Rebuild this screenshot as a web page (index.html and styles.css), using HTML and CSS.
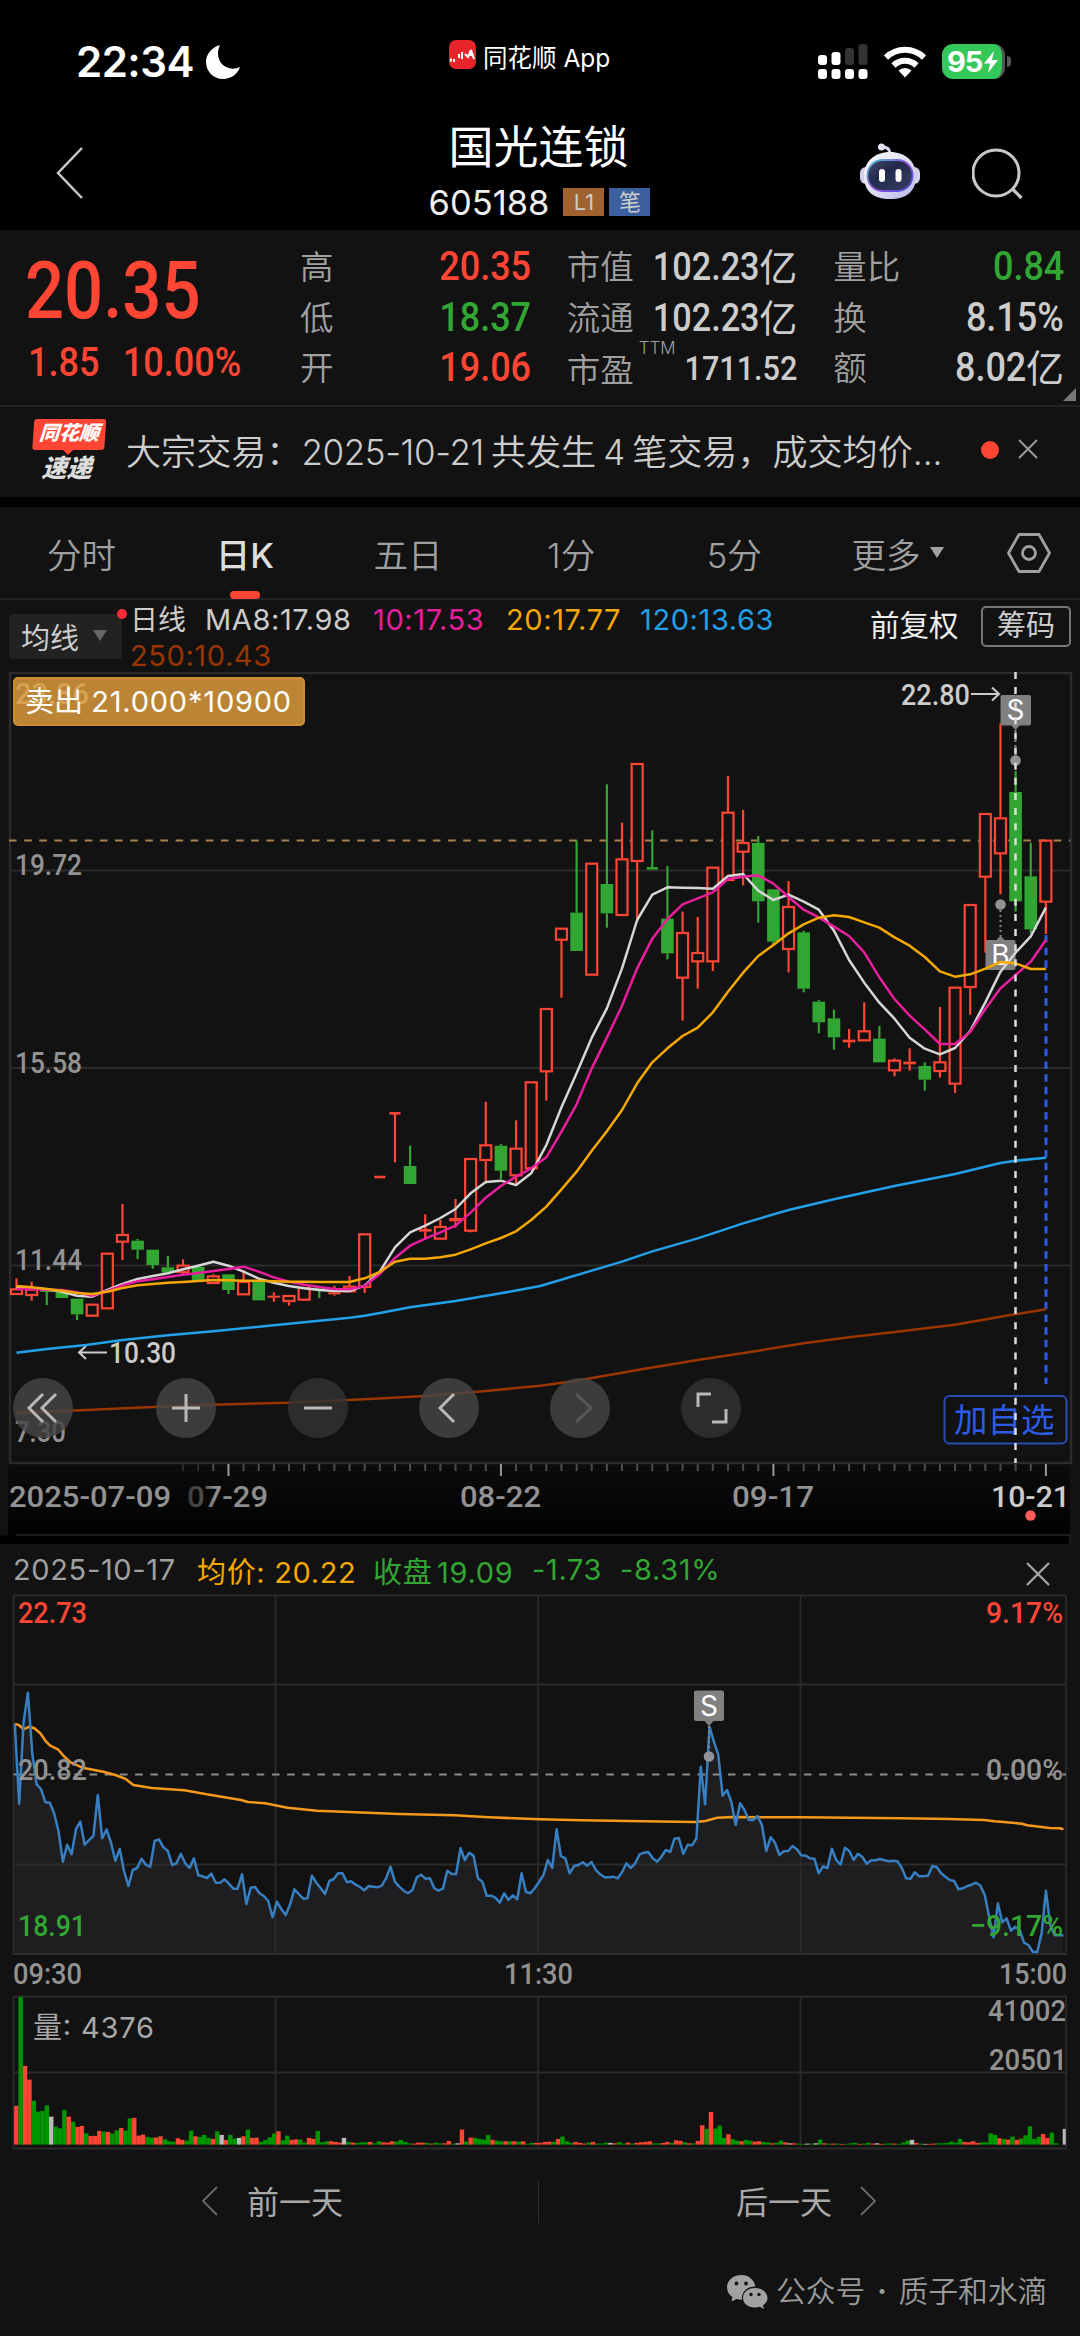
FILE: index.html
```html
<!DOCTYPE html>
<html lang="zh-CN">
<head>
  <meta charset="UTF-8">
  <title>国光连锁 605188</title>
  <link rel="stylesheet" href="styles.css">
</head>
<body>

<div class="status-bar">
  <div class="status-time">22:34
    <svg width="36" height="36" viewBox="0 0 36 36"><path d="M15 1 C7 3 1 10 1 18 C1 27 8 35 18 35 C26 35 33 30 35 23 C31 25 27 25 24 24 C15 22 10 11 15 1 Z" fill="#fff"/></svg>
  </div>
  <div class="status-app">
    <svg width="27" height="29" viewBox="0 0 27 29"><rect width="27" height="29" rx="7" fill="#e8252b"/><path d="M2 18.500 v3 M5 19 v3 M10 14 v4 M13 12 v7 M16 14 l3 3 l3 -7 v6 M22 10 l3 9" fill="none" stroke="#fff" stroke-width="2"/></svg>
    <span>同花顺 App</span>
  </div>
  <div class="status-icons">
    <svg width="50" height="36" viewBox="0 0 50 36">
      <g fill="#fff"><rect x="0" y="11" width="9" height="10" rx="3"/><rect x="13.5" y="8" width="9" height="13" rx="3"/></g>
      <g fill="#333"><rect x="27" y="4" width="9" height="17" rx="3"/><rect x="40.5" y="0" width="9" height="21" rx="3"/></g>
      <g fill="#fff"><rect x="0" y="25" width="9" height="10" rx="3"/><rect x="13.5" y="25" width="9" height="10" rx="3"/><rect x="27" y="25" width="9" height="10" rx="3"/><rect x="40.5" y="25" width="9" height="10" rx="3"/></g>
    </svg>
    <svg class="wifi" width="42" height="32" viewBox="0 0 42 32">
      <g fill="none" stroke="#fff" stroke-width="6"><path d="M2 11.5 A27 27 0 0 1 40 11.5"/><path d="M9.5 19.5 A16.5 16.5 0 0 1 32.5 19.5"/></g>
      <path d="M21 31.500 L14.500 24.500 A9.500 9.500 0 0 1 27.500 24.500 Z" fill="#fff"/>
    </svg>
    <div class="battery">95<svg width="14" height="22" viewBox="0 0 14 22"><path d="M10 0 L0 12.500 h6 L4 22 L14 9 H8 Z" fill="#fff"/></svg></div>
    <div class="battery-cap"></div>
  </div>
</div>

<div class="nav">
  <svg class="back" width="28" height="52" viewBox="0 0 28 52"><path d="M26 1 L2 26 L26 51" fill="none" stroke="#c8c8c8" stroke-width="2.500"/></svg>
  <div class="nav-title">
    <h1>国光连锁</h1>
    <div class="code">605188 <span class="tag tag-l1">L1</span><span class="tag tag-note">笔</span></div>
  </div>
  <svg class="robot" width="62" height="58" viewBox="0 0 62 58">
    <defs>
      <linearGradient id="head" x1="0" y1="0" x2="1" y2="1"><stop offset="0" stop-color="#fff"/><stop offset="0.5" stop-color="#dedef4"/><stop offset="1" stop-color="#b8b8ea"/></linearGradient>
      <linearGradient id="rim" x1="0" y1="0" x2="1" y2="1"><stop offset="0" stop-color="#45c8d8"/><stop offset="0.5" stop-color="#9450d8"/><stop offset="1" stop-color="#4a50e0"/></linearGradient>
      <linearGradient id="face" x1="0" y1="0" x2="1" y2="1"><stop offset="0" stop-color="#464d70"/><stop offset="0.400" stop-color="#222a4c"/><stop offset="1" stop-color="#383f66"/></linearGradient>
    </defs>
    <path d="M31 11 Q31 4 23 4" fill="none" stroke="#dcdcf0" stroke-width="2.800"/>
    <circle cx="22.500" cy="4" r="3.500" fill="#e4e4f6"/>
    <rect x="1" y="24" width="60" height="17" rx="6" fill="#d2d2ea"/>
    <path d="M31 9 C46 9 57 18 57 33 C57 48 48 56 31 56 C14 56 5 48 5 33 C5 18 16 9 31 9 Z" fill="url(#head)"/>
    <rect x="8.500" y="17" width="45" height="31" rx="15" fill="url(#face)" stroke="url(#rim)" stroke-width="1.800"/>
    <rect x="20" y="26" width="6" height="13" rx="3" fill="#fff"/><rect x="36.500" y="26" width="6" height="13" rx="3" fill="#fff"/>
  </svg>
  <svg class="search" width="52" height="52" viewBox="0 0 52 52"><circle cx="24" cy="25" r="23" fill="none" stroke="#c8c8c8" stroke-width="3"/><path d="M40.500 41 L49.500 50" stroke="#c8c8c8" stroke-width="3.200"/></svg>
</div>

<div class="quote">
  <div class="quote-main red">
    <div class="price num">20.35</div>
    <div class="change num"><span>1.85</span><span>10.00%</span></div>
  </div>
  <dl class="stats stats-a">
    <div><dt>高</dt><dd class="num red">20.35</dd></div>
    <div><dt>低</dt><dd class="num green">18.37</dd></div>
    <div><dt>开</dt><dd class="num red">19.06</dd></div>
  </dl>
  <dl class="stats stats-b">
    <div><dt>市值</dt><dd><span class="num">102.23</span>亿</dd></div>
    <div><dt>流通</dt><dd><span class="num">102.23</span>亿</dd></div>
    <div><dt class="pe">市盈<sup>TTM</sup></dt><dd class="num small">1711.52</dd></div>
  </dl>
  <dl class="stats stats-c">
    <div><dt>量比</dt><dd class="num green">0.84</dd></div>
    <div><dt>换</dt><dd class="num">8.15%</dd></div>
    <div><dt>额</dt><dd><span class="num">8.02</span>亿</dd></div>
  </dl>
  <div class="corner"></div>
</div>

<div class="news">
  <div class="news-logo"><b>同花顺</b><i>速递</i></div>
  <p>大宗交易：<span class="n1">2025-10-21</span>共发生<span class="n2">4</span>笔交易，成交均价...</p>
  <span class="dot"></span>
  <svg width="20" height="20" viewBox="0 0 20 20"><path d="M1 1 L19 19 M19 1 L1 19" stroke="#999" stroke-width="2"/></svg>
</div>

<div class="tabs">
  <div class="tab">分时</div>
  <div class="tab active">日K</div>
  <div class="tab">五日</div>
  <div class="tab">1分</div>
  <div class="tab">5分</div>
  <div class="tab">更多<span class="caret"></span></div>
  <svg class="gear" width="44" height="40" viewBox="0 0 44 40"><path d="M12 1.500 H32 L42.500 20 L32 38.500 H12 L1.500 20 Z" fill="none" stroke="#a0a0a0" stroke-width="2.800" stroke-linejoin="round"/><circle cx="22" cy="20" r="6.500" fill="none" stroke="#a0a0a0" stroke-width="2.800"/></svg>
</div>

<div class="ma-row">
  <div class="ma-select">均线<span class="caret"></span></div>
  <div class="ma-values">
    <span class="period">日线</span><span class="ma8">MA8:17.98</span><span class="ma10">10:17.53</span><span class="ma20">20:17.77</span><span class="ma120">120:13.63</span>
    <div class="ma250">250:10.43</div>
  </div>
  <div class="adjust">前复权</div>
  <div class="chips">筹码</div>
</div>

<div class="k-wrap">
  <svg id="kchart" width="1080" height="872" viewBox="0 672 1080 872">
    <defs>
      <linearGradient id="axisBg" x1="0" y1="0" x2="0" y2="1"><stop offset="0" stop-color="#0c0c0c"/><stop offset="1" stop-color="#000"/></linearGradient>
      <linearGradient id="fadeText" x1="0" y1="0" x2="1" y2="0"><stop offset="0" stop-color="#3c3c3c"/><stop offset="0.200" stop-color="#505050"/><stop offset="0.350" stop-color="#8e8e8e"/></linearGradient>
    </defs>
    <rect x="8" y="1463" width="1062" height="81" fill="url(#axisBg)"/>
    <path d="M0 1540 H1065" stroke="#000" stroke-width="9"/>
    <path d="M16 1535 H1070 V1544" class="axis-end"/>
    <rect x="10" y="673" width="1061" height="790" class="grid frame"/>
    <path d="M10 870.500 H1070 M10 1068 H1070 M10 1265.500 H1070" class="grid"/>
    <path d="M9 840.500 H1070" class="last-price"/>
    <g id="candles"></g>
    <g class="axis">
      <text x="15" y="875" textLength="67" lengthAdjust="spacingAndGlyphs">19.72</text>
      <text x="15" y="1073" textLength="67" lengthAdjust="spacingAndGlyphs">15.58</text>
      <text x="15" y="1270" textLength="67" lengthAdjust="spacingAndGlyphs">11.44</text>
      <text x="15" y="1442" textLength="51" lengthAdjust="spacingAndGlyphs">7.30</text>
      <text x="9" y="1507" textLength="162" lengthAdjust="spacingAndGlyphs">2025-07-09</text>
      <text x="187" y="1507" textLength="81" lengthAdjust="spacingAndGlyphs" class="fade">07-29</text>
      <text x="460" y="1507" textLength="81" lengthAdjust="spacingAndGlyphs">08-22</text>
      <text x="732" y="1507" textLength="82" lengthAdjust="spacingAndGlyphs">09-17</text>
    </g>
    <g class="axis bright">
      <text x="991" y="1507" textLength="79" lengthAdjust="spacingAndGlyphs">10-21</text>
      <text x="901" y="705" textLength="69" lengthAdjust="spacingAndGlyphs">22.80</text>
      <text x="109" y="1363" textLength="67" lengthAdjust="spacingAndGlyphs">10.30</text>
    </g>
    <path d="M971 694 H999 M992 687.500 L999 694 L992 700.500 M107 1352.500 H79 M86 1346 L79 1352.500 L86 1359" class="arrow"/>
    <g id="ticks"></g>
    <circle cx="1030.500" cy="1515.500" r="5.200" fill="#ff5a5a"/>
    <path d="M1046 935 V1384" class="today"/>
    <g class="marker">
      <rect x="985.500" y="940" width="30" height="30" rx="2"/>
      <path d="M996 940.500 l4.500 -5 l4.500 5 Z"/>
      <path d="M1000.500 910 V936" class="dots"/>
      <circle cx="1000.500" cy="904.500" r="5.300"/>
      <text x="1000.500" y="965">B</text>
      <rect x="1000.500" y="695" width="30.500" height="30.500" rx="2"/>
      <path d="M1011 725 l4.500 5 l4.500 -5 Z"/>
      <path d="M1015.500 730 V756" class="dots"/>
      <circle cx="1015.500" cy="760.500" r="5.300"/>
      <text x="1015.500" y="720">S</text>
    </g>
    <g id="averages"></g>
    <rect x="944.500" y="1396" width="122" height="47.500" rx="5" class="add-box"/>
    <text x="954" y="1432" class="add-text">加自选</text>
    <path d="M1015.500 672 V1463" class="cursor"/>
  </svg>
  <div class="trade-tip"><i>23.86</i>卖出 <span>21.000*10900</span></div>
  <div class="chart-tools">
    <button><svg viewBox="0 0 60 60"><path d="M30 16 L16 30 L30 44 M43 16 L29 30 L43 44"/></svg></button>
    <button><svg viewBox="0 0 60 60"><path d="M30 16 V44 M16 30 H44" stroke-width="3.500"/></svg></button>
    <button class="dim"><svg viewBox="0 0 60 60"><path d="M16 30 H44" stroke-width="3.500"/></svg></button>
    <button><svg viewBox="0 0 60 60"><path d="M35 16 L21 30 L35 44"/></svg></button>
    <button class="off"><svg viewBox="0 0 60 60"><path d="M26 16 L41 30 L26 44"/></svg></button>
    <button class="dim"><svg viewBox="0 0 60 60"><path d="M17 29 V16 H30 M45 31 V44 H31" stroke-width="3.500"/></svg></button>
  </div>
</div>

<div class="day-head">
  <span class="d-date">2025-10-17</span>
  <span class="d-avg">均价: <b>20.22</b></span>
  <span class="d-close">收盘 <b>19.09</b></span>
  <span class="d-diff">-1.73</span>
  <span class="d-pct">-8.31%</span>
  <svg width="24" height="24" viewBox="0 0 24 24"><path d="M1 1 L23 23 M23 1 L1 23" stroke="#a8a8a8" stroke-width="2.200"/></svg>
</div>

<svg id="daychart" class="block" width="1080" height="564" viewBox="0 1592 1080 564">
  <path id="dayArea" fill="#1e1e20"/>
  <path d="M13.500 1595.500 H1066 V1954 H13.500 Z M13.500 1684.500 H1066 M13.500 1864.500 H1066 M275.500 1595 V1954 M538 1595 V1954 M800.500 1595 V1954" class="grid"/>
  <path d="M13.500 1996.500 H1066 V2148.500 H13.500 Z M13.500 2072.500 H1066 M275.500 1996 V2148 M538 1996 V2148 M800.500 1996 V2148" class="grid"/>
  <path d="M13.500 1774.500 H1066" class="zero"/>
  <path id="dayAvg" class="line" stroke="#f5981c"/>
  <path id="dayPrice" class="line" stroke="#377fc0"/>
  <g id="volume"></g>
  <g class="axis">
    <text x="18" y="1623" textLength="69" lengthAdjust="spacingAndGlyphs" class="up">22.73</text>
    <text x="986" y="1623" textLength="77" lengthAdjust="spacingAndGlyphs" class="up">9.17%</text>
    <text x="18" y="1779.500" textLength="69" lengthAdjust="spacingAndGlyphs">20.82</text>
    <text x="986" y="1779.500" textLength="77" lengthAdjust="spacingAndGlyphs">0.00%</text>
    <text x="18" y="1936" textLength="68" lengthAdjust="spacingAndGlyphs" class="down">18.91</text>
    <text x="970" y="1936" textLength="93" lengthAdjust="spacingAndGlyphs" class="down">−9.17%</text>
    <text x="13" y="1984" textLength="69" lengthAdjust="spacingAndGlyphs">09:30</text>
    <text x="504" y="1984" textLength="69" lengthAdjust="spacingAndGlyphs">11:30</text>
    <text x="999" y="1984" textLength="68" lengthAdjust="spacingAndGlyphs">15:00</text>
    <text x="988" y="2020.500" textLength="78" lengthAdjust="spacingAndGlyphs">41002</text>
    <text x="989" y="2070" textLength="78" lengthAdjust="spacingAndGlyphs">20501</text>
  </g>
  <text x="33" y="2038" textLength="121" class="vol-text">量: 4376</text>
  <g class="marker">
    <rect x="694" y="1690.500" width="30" height="30.500" rx="2"/>
    <path d="M704.500 1721 l4.500 5 l4.500 -5 Z"/>
    <path d="M709 1726 V1751" class="dots"/>
    <circle cx="709" cy="1756.500" r="5.300"/>
    <text x="709" y="1716">S</text>
  </g>
</svg>

<div class="day-nav">
  <div class="prev"><svg width="16" height="30" viewBox="0 0 16 30"><path d="M15 1 L1 15 L15 29" fill="none" stroke="#6a6a6a" stroke-width="1.800"/></svg><span>前一天</span></div>
  <div class="next"><span>后一天</span><svg width="16" height="30" viewBox="0 0 16 30"><path d="M1 1 L15 15 L1 29" fill="none" stroke="#6a6a6a" stroke-width="1.800"/></svg></div>
</div>

<div class="watermark">
  <svg width="41" height="34" viewBox="0 0 41 34">
    <path d="M14.500 0 C6 0 0 5.500 0 12.500 C0 16.500 2 19.800 5.500 22 L4.500 26.500 L9.500 24 C11 24.500 13 24.800 15 24.800 C14 17 20 11.500 28.500 11.500 C27 4.500 21.500 0 14.500 0 Z" fill="#a2a2a2"/>
    <path d="M28 13 C20.500 13 16 17.500 16 23 C16 28.500 21 32.500 28 32.500 C29.700 32.500 31.300 32.300 32.800 31.800 L37 34 L36 30.300 C39 28.500 40.500 26 40.500 23 C40.500 17.500 35 13 28 13 Z" fill="#a2a2a2"/>
    <g fill="#121212"><circle cx="9.500" cy="8.500" r="1.900"/><circle cx="19" cy="8.500" r="1.900"/><circle cx="24" cy="19.500" r="1.700"/><circle cx="32" cy="19.500" r="1.700"/></g>
  </svg>
  <span>公众号<em>·</em>质子和水滴</span>
</div>

<script src="script.js"></script>
</body>
</html>
```
FILE: styles.css
```css
* {
  box-sizing: border-box;
}
body {
  margin: 0;
  width: 1080px;
  height: 2336px;
  overflow: hidden;
  background: #121212;
  color: #ccc;
  font-family: Inter, "Noto Sans CJK SC", sans-serif;
}
svg {
  display: block;
  flex: none;
}
.red { color: #ff4533; }
.green { color: #32a632; }

/* status bar */
.status-bar {
  display: flex;
  height: 110px;
  background: #000;
  color: #fff;
}
.status-time {
  display: flex;
  align-items: center;
  gap: 11px;
  width: 449px;
  height: 123px;
  padding-left: 76px;
  font-size: 42px;
  font-weight: 600;
  letter-spacing: -0.5px;
}
.status-app {
  display: flex;
  align-items: center;
  gap: 7px;
  width: 369px;
  height: 109px;
  font-size: 24.500px;
  white-space: nowrap;
}
.status-app span { padding-top: 3px; }
.status-icons {
  display: flex;
  align-items: center;
  height: 123px;
}
.wifi {
  margin: 0 16px 0 16px;
}
.battery {
  display: flex;
  align-items: center;
  gap: 2px;
  width: 63px;
  height: 35px;
  padding-left: 5px;
  border-radius: 11px;
  border-right: 3px solid #555;
  background: #34c759;
  font-size: 29px;
  font-weight: 700;
  letter-spacing: -1px;
}
.battery-cap {
  width: 4px;
  height: 11px;
  margin-left: 2px;
  border-radius: 0 4px 4px 0;
  background: #555;
}

/* title */
.nav {
  display: flex;
  align-items: center;
  height: 120px;
  padding: 0 56px;
  background: #000;
}
.back { margin-top: 6px; }
.nav-title {
  width: 778px;
  padding-left: 133px;
  text-align: center;
}
.nav-title h1 {
  margin: 0;
  padding-right: 2px;
  color: #fff;
  font-size: 45px;
  font-weight: 400;
  line-height: 64px;
}
.code {
  display: flex;
  justify-content: center;
  align-items: center;
  height: 44px;
  color: #f0f0f0;
  font-size: 34.500px;
}
.tag {
  width: 41px;
  height: 28px;
  margin-left: 5px;
  color: #ccc;
  font-size: 22px;
  line-height: 28px;
}
.tag-l1 { margin-left: 14px; background: #a0622f; }
.tag-note { background: #3c5f9f; }
.robot { margin: 4px 51px 0 -3px; }
.search { margin-top: 7px; }

/* quote panel */
.num {
  font-family: Roboto, sans-serif;
  font-weight: 500;
}
.quote {
  display: flex;
  position: relative;
  height: 177px;
  padding: 12px 16px 0 28px;
  border-bottom: 2px solid #222;
}
.quote-main { width: 272px; }
.price {
  height: 95px;
  margin-left: -3px;
  font-size: 80px;
  line-height: 99px;
  transform: scaleX(0.86);
  transform-origin: left;
}
.change {
  display: flex;
  gap: 26px;
  width: 290px;
  font-size: 40px;
  line-height: 52px;
  transform: scaleX(0.9);
  transform-origin: left;
}
.stats { margin: 0; }
.stats > div {
  display: flex;
  justify-content: space-between;
  height: 50.500px;
  align-items: center;
}
.stats dt {
  color: #a0a0a0;
  font-size: 33.500px;
  font-weight: 350;
  line-height: 48px;
}
.stats dd {
  display: flex;
  align-items: center;
  margin: 0;
  font-size: 40px;
  line-height: 48px;
}
.stats .num {
  transform: scaleX(0.9);
  transform-origin: right;
}
.stats-a { width: 231px; }
.stats-b { width: 231px; margin-left: 36px; }
.stats-c { width: 231px; margin-left: 36px; }
.stats .small { font-size: 34px; }
.stats dd:not(.num) { font-size: 38px; }
.stats-c dd .num { font-size: 40px; }
.stats dt.pe {
  position: relative;
  padding-top: 4px;
}
.pe sup {
  position: absolute;
  left: 72px;
  top: -6px;
  font-size: 17px;
  line-height: 24px;
}
.corner {
  position: absolute;
  right: 4px;
  bottom: 4px;
  border-left: 13px solid transparent;
  border-bottom: 13px solid #777;
}

/* news line */
.news {
  display: flex;
  align-items: center;
  height: 100px;
  padding: 0 41px 10px 31px;
  border-bottom: 10px solid #000;
}
.news-logo {
  display: flex;
  flex-direction: column;
  align-items: center;
  width: 74px;
  margin: 10px 21px 0 0;
  font-weight: 900;
  line-height: 30px;
  transform: skewX(-4deg);
}
.news-logo b {
  position: relative;
  width: 72px;
  height: 31px;
  background: #ff4533;
  color: #fff;
  border-radius: 3px;
  font-size: 20px;
  font-style: italic;
  line-height: 29px;
  text-align: center;
}
.news-logo b::after {
  content: "";
  position: absolute;
  left: 31px;
  top: 31px;
  border: 5px solid transparent;
  border-top-color: #ff4533;
  border-bottom: 0;
}
.news-logo i {
  color: #ddd;
  font-size: 25px;
  line-height: 36px;
}
.news p {
  width: 841px;
  margin: 0;
  font-size: 35.100px;
  font-weight: 350;
  white-space: nowrap;
  padding-top: 5px;
}
.n1 { margin-right: 7px; font-size: 35px; letter-spacing: -0.400px; }
.n2 { margin: 0 7px; font-size: 35px; }
.dot {
  width: 18px;
  height: 18px;
  margin: 5px 19px 0 14px;
  border-radius: 50%;
  background: #ff4533;
}
.news svg { margin-top: 4px; }

/* tabs */
.tabs {
  display: flex;
  align-items: center;
  height: 93px;
  border-bottom: 2px solid #222;
}
.tab {
  position: relative;
  display: flex;
  justify-content: center;
  align-items: center;
  width: 163.200px;
  height: 90px;
  color: #a0a0a0;
  font-size: 34.500px;
  font-weight: 350;
}
.tab.active { color: #ddd; font-weight: 500; }
.tab.active::after {
  content: "";
  position: absolute;
  bottom: -1px;
  left: 67px;
  width: 30px;
  height: 8px;
  border-radius: 4px;
  background: #ff4533;
}
.caret {
  margin-left: 9px;
  border: 7.500px solid transparent;
  border-top: 11px solid #a0a0a0;
  border-bottom: 0;
}
.gear { margin-left: 28px; }

/* moving averages */
.ma-row {
  display: flex;
  height: 72px;
  padding-left: 9px;
  font-size: 29px;
}
.ma-select {
  position: relative;
  display: flex;
  align-items: center;
  width: 113px;
  height: 45px;
  margin: 14px 8px 0 0;
  padding: 0 0 2px 12px;
  border-radius: 4px;
  background: #222;
}
.ma-select .caret { margin-left: 14px; border-top-color: #666; }
.ma-select::after {
  content: "";
  position: absolute;
  right: -5px;
  top: -5px;
  width: 10px;
  height: 10px;
  border-radius: 50%;
  background: #ff2a36;
}
.ma-values {
  width: 740px;
  padding-top: 2px;
  line-height: 35px;
  letter-spacing: 0.600px;
  white-space: nowrap;
}
.ma-values span { display: inline-block; }
.ma-values .period { width: 75px; font-size: 28px; letter-spacing: 0; }
.ma8 { width: 168px; }
.ma10 { width: 133px; color: #e81e9d; }
.ma20 { width: 134px; color: #f5a800; }
.ma120 { color: #22a0ea; }
.ma250 { color: #9a3500; }
.adjust {
  width: 111px;
  color: #eee;
  font-size: 29.500px;
  line-height: 51px;
}
.chips {
  width: 90px;
  height: 41px;
  margin-top: 6px;
  border: 2px solid #777;
  border-radius: 5px;
  line-height: 36px;
  text-align: center;
}

/* charts */
.k-wrap {
  position: relative;
  height: 872px;
}
.grid { fill: none; stroke: #2b2b2b; stroke-width: 1.800; }
.frame { stroke-width: 2.500; }
.axis-end { fill: none; stroke: #1b1b1b; stroke-width: 2; }
.last-price { stroke: #aa8250; stroke-width: 1.800; stroke-dasharray: 7.600 7.540; }
.zero { stroke: #8c8c8c; stroke-width: 1.800; stroke-dasharray: 7.600 7.600; }
.today { stroke: #2d5be6; stroke-width: 3; stroke-dasharray: 7.500 5.150; }
.cursor { stroke: #ddd; stroke-width: 2.500; stroke-dasharray: 7 8.120; }
.line { fill: none; stroke-width: 2.500; stroke-linejoin: round; }
.arrow { fill: none; stroke: #ccc; stroke-width: 2; }
.axis text {
  fill: #929292;
  font-family: Roboto, sans-serif;
  font-size: 30px;
  font-weight: 500;
}
.axis .fade { fill: url(#fadeText); }
.axis.bright text { fill: #ccc; }
.axis .up { fill: #ff4533; }
.axis .down { fill: #32a632; }
.marker rect, .marker path { fill: #808080; }
.marker circle { fill: #929296; }
.marker text { fill: #fff; font-size: 28px; text-anchor: middle; }
.marker .dots { stroke: #888; stroke-width: 2; stroke-dasharray: 2 3; }
.add-box { fill: none; stroke: #274bb2; stroke-width: 2; }
.add-text { fill: #2d5be6; font-size: 33.500px; font-weight: 400; }
.vol-text { fill: #a8a8a8; font-size: 29px; }
.trade-tip {
  position: absolute;
  left: 13px;
  top: 4.500px;
  width: 292px;
  height: 49px;
  padding-left: 10px;
  border: 2px solid #cf8e33;
  border-radius: 5px;
  background: #bb8535;
  color: #fff;
  font-size: 29px;
  line-height: 45px;
  white-space: nowrap;
}
.trade-tip i {
  position: absolute;
  left: 0;
  top: 2px;
  color: #d6a254;
  font-family: Roboto, sans-serif;
  font-style: normal;
  font-weight: 500;
  line-height: 26px;
  z-index: -1;
}
.trade-tip { z-index: 0; }
.trade-tip span { letter-spacing: 0.800px; }
.chart-tools {
  position: absolute;
  left: 13px;
  top: 706px;
  display: flex;
  gap: 71.300px;
}
.chart-tools button {
  width: 60px;
  height: 60px;
  padding: 0;
  border: 0;
  border-radius: 50%;
  background: rgba(70, 70, 70, 0.82);
}
.chart-tools button:first-child { margin-right: 12px; }
.chart-tools .dim { background: rgba(50, 50, 50, 0.82); }
.chart-tools path { fill: none; stroke: #b8b8b8; stroke-width: 3; }
.chart-tools .off path { stroke: #585858; }

/* single day */
.day-head {
  display: flex;
  align-items: center;
  height: 48px;
  padding: 3px 0 0 13px;
  font-size: 29px;
  letter-spacing: 0.650px;
  white-space: nowrap;
}
.day-head b { font-weight: 400; }
.d-date { width: 184px; color: #a0a0a0; }
.d-avg { width: 176px; color: #f5a800; }
.d-close { width: 159px; color: #32a632; word-spacing: -4px; }
.d-diff { width: 88px; color: #32a632; }
.d-pct { width: 406px; color: #32a632; }
.day-head svg { margin-top: 9px; }
.day-nav {
  display: flex;
  height: 92px;
  align-items: center;
  color: #a8a8a8;
  font-size: 32px;
}
.day-nav span { margin-top: -5px; }
.day-nav svg { margin-top: -2px; }
.prev {
  display: flex;
  align-items: center;
  gap: 29px;
  width: 539px;
  height: 42px;
  padding-left: 202px;
  border-right: 1px solid #2e2e2e;
}
.next {
  display: flex;
  align-items: center;
  gap: 28px;
  padding-left: 197px;
}
.watermark {
  display: flex;
  align-items: center;
  gap: 8px;
  padding: 22px 0 0 727px;
  color: #9a9a9a;
  font-family: "Noto Sans CJK SC", sans-serif;
  font-size: 29.800px;
  font-weight: 350;
  line-height: 44px;
  white-space: nowrap;
}
.watermark span { margin-top: -3px; }
.watermark em {
  display: inline-block;
  width: 33px;
  font-family: Inter, sans-serif;
  font-style: normal;
  font-weight: 700;
  text-align: center;
}
```
FILE: script.js
```js
var RED = '#ff4533';
var GREEN = '#32a632';

// horizontal position of trading day i, vertical position of a level
function kx(i) { return 16.5 + 15.138 * i; }
function ky(v) { return 660 + v / 3; }

// color, high, body top, body bottom, low
var candles = [
  ['r',1855,1888,1902,1904],['r',1865,1889,1905,1922],['g',1890,1890,1896,1935],['g',1892,1894,1914,1914],['g',1916,1916,1963,1980],
  ['r',1934,1934,1967,1967],['r',1781,1781,1945,1945],['r',1632,1725,1745,1800],['g',1737,1742,1769,1797],['g',1769,1769,1815,1826],
  ['g',1788,1822,1838,1838],['r',1798,1817,1836,1842],['g',1815,1821,1861,1861],['r',1843,1849,1869,1869],['g',1843,1843,1890,1902],
  ['r',1830,1866,1903,1903],['g',1866,1866,1921,1921],['r',1897,1907,1913,1925],['r',1907,1908,1923,1937],['r',1884,1884,1919,1919],
  ['g',1883,1883,1891,1914],['r',1877,1897,1903,1907],['r',1848,1880,1894,1894],['r',1723,1723,1881,1899],['r',1551,1551,1551,1551],
  ['r',1360,1360,1360,1507],['g',1457,1518,1572,1572],['r',1663,1707,1715,1738],['r',1680,1701,1736,1736],['r',1617,1674,1684,1703],
  ['r',1497,1497,1712,1717],['r',1325,1456,1500,1570],['g',1452,1457,1532,1557],['r',1381,1466,1546,1570],['r',1267,1267,1525,1525],
  ['r',1047,1047,1234,1322],['r',806,806,839,1013],['g',542,758,873,873],['r',611,611,944,944],['g',373,672,760,803],
  ['r',488,598,765,765],['r',312,312,603,785],['g',511,625,625,625],['g',618,776,880,898],['r',755,819,953,1082],
  ['r',771,879,904,986],['r',623,623,904,933],['r',348,458,660,660],['r',450,549,575,676],['g',528,549,724,788],
  ['g',688,688,845,854],['r',663,741,867,937],['g',812,817,986,997],['g',1020,1025,1087,1120],['g',1049,1075,1132,1169],
  ['r',1107,1139,1147,1163],['r',1027,1114,1141,1141],['g',1098,1136,1207,1207],['r',1195,1202,1231,1249],['r',1165,1205,1213,1232],
  ['g',1207,1218,1259,1292],['r',1041,1207,1233,1253],['r',983,983,1271,1299],['r',735,735,981,1064],['r',462,462,650,878],
  ['r',190,475,580,703],['g',333,396,724,755],['g',548,649,808,820],['r',542,542,725,822]
];

var out = '';
candles.forEach(function (c, i) {
  var x = kx(i), color = c[0] === 'r' ? RED : GREEN;
  var hi = ky(c[1]), top = ky(c[2]), bot = ky(c[3]), lo = ky(c[4]);
  if (hi < top) out += '<path d="M' + x + ' ' + hi + 'V' + top + '" stroke="' + color + '" stroke-width="2.2"/>';
  if (lo > bot) out += '<path d="M' + x + ' ' + bot + 'V' + lo + '" stroke="' + color + '" stroke-width="2.2"/>';
  if (bot === top) {
    out += '<path d="M' + (x - 5.5) + ' ' + top + 'h11" stroke="' + color + '" stroke-width="2.6"/>';
  } else if (c[0] === 'g' || bot - top < 4) {
    out += '<rect x="' + (x - 6.3) + '" y="' + top + '" width="12.6" height="' + (bot - top) + '" fill="' + color + '"/>';
  } else {
    out += '<rect x="' + (x - 5.5) + '" y="' + top + '" width="11" height="' + (bot - top) + '" fill="#121212" stroke="' + color + '" stroke-width="2.2"/>';
  }
});
document.getElementById('candles').innerHTML = out;

var ma8 = [1883,1885,1888,1895,1907,1910,1890,1872,1857,1848,1840,1828,1817,1805,1817,1835,1856,1868,1878,1885,1890,1893,1893,1877,1835,1762,1717,1697,1674,1647,1600,1566,1562,1575,1540,1455,1342,1240,1133,1045,925,780,704,682,683,684,686,648,642,692,720,704,725,749,812,900,968,1028,1076,1133,1166,1183,1164,1113,1027,935,878,829,743];
var ma10 = [1887,1887,1889,1890,1897,1907,1893,1876,1864,1858,1851,1844,1839,1833,1827,1820,1835,1852,1865,1874,1881,1887,1888,1878,1842,1794,1757,1736,1717,1697,1658,1613,1578,1550,1525,1492,1415,1333,1225,1133,1037,925,836,777,733,715,697,657,650,646,671,711,749,772,800,828,877,952,1017,1067,1108,1152,1152,1116,1047,985,945,905,840];
var ma20 = [1878,1882,1887,1892,1899,1902,1895,1884,1876,1872,1868,1866,1863,1860,1861,1862,1862,1864,1865,1865,1866,1866,1866,1855,1836,1805,1796,1796,1792,1784,1768,1750,1734,1714,1680,1640,1588,1535,1472,1414,1350,1270,1207,1165,1128,1103,1057,995,938,888,855,820,793,773,766,771,787,803,832,857,891,934,950,943,926,906,910,927,927];
var ma120 = [[0,2078],[2,2067],[4.6,2055],[7,2040],[10,2026],[13,2014],[16,2000],[19,1987],[22,1973],[23,1967],[24,1959],[26,1942],[29,1923],[32,1900],[34.6,1878],[38,1832],[40,1805],[42,1774],[45,1735],[48,1690],[51,1650],[54,1618],[58,1578],[62,1542],[65,1509],[66,1502],[68,1493]];
var ma250 = [[0,2259],[4.6,2250],[9,2241],[13,2234],[18,2228],[23,2218],[27,2208],[31,2193],[34.6,2177],[37,2162],[41.5,2126],[45,2100],[49,2072],[52,2050],[55,2032],[58,2016],[62,1994],[65,1970],[68,1948]];

function points(list) {
  return list.map(function (p, i) {
    return Array.isArray(p) ? kx(p[0]) + ',' + ky(p[1]) : kx(i) + ',' + ky(p);
  }).join(' ');
}
document.getElementById('averages').innerHTML =
  [[ma250, '#9a3500'], [ma120, '#22a0ea'], [ma8, '#d6d6d6'], [ma10, '#e81e9d'], [ma20, '#f5a800']].map(function (m) {
    return '<polyline class="line" points="' + points(m[0]) + '" stroke="' + m[1] + '"/>';
  }).join('');

// date axis ticks
out = '';
for (var i = 11; i < 69; i++) {
  var major = (i - 14) % 18 === 0;
  var shade = i < 13 ? '#2a2a2a' : (major ? '#999' : '#4c4c4c');
  out += '<path d="M' + kx(i) + ' 1464v' + (major ? 12 : 7) + '" stroke="' + shade + '" stroke-width="2"/>';
}
document.getElementById('ticks').innerHTML = out;

// price per minute
var day = [552,792,548,458,640,733,747,787,788,820,873,965,914,943,867,845,914,900,888,765,895,868,907,962,927,993,1038,990,984,956,974,981,903,898,922,932,975,970,941,970,984,955,1006,1009,1014,1001,1028,1028,1018,1031,1046,1046,1003,1092,1043,1041,1060,1068,1083,1132,1085,1107,1125,1093,1048,1062,1076,1075,1007,1028,1044,1062,1023,1017,1000,1000,1027,1024,1034,1041,1051,1038,1040,1042,1037,1014,980,1025,1040,1052,1060,1050,1012,1004,1016,1015,1044,1052,1046,992,1002,1002,925,960,938,947,1015,1025,1067,1067,1073,1088,1060,1080,1066,1078,1000,1056,1060,1045,1025,
  1005,960,984,868,948,955,1000,978,975,967,977,966,990,1003,1012,1012,1010,1015,996,970,984,970,943,938,936,955,965,950,930,936,896,894,942,914,916,895,680,793,560,605,643,767,750,785,855,790,810,840,840,828,855,933,892,908,945,934,933,918,928,946,947,955,956,1000,979,984,926,960,974,923,933,960,941,951,971,961,961,957,961,964,962,964,983,1015,1016,997,1009,1009,1007,978,981,1000,1010,1020,1023,1048,1045,1038,1034,1028,1037,1065,1130,1192,1090,1147,1135,1172,1160,1170,1208,1215,1235,1236,1180,1052,1155,1186,1186,1186];
var avg = [[43,552],[55,555],[68,568],[85,560],[100,565],[117,580],[133,604],[145,616],[168,628],[185,648],[205,667],[240,683],[300,695],[335,705],[365,717],[387,735],[440,744],[535,751],[600,763],[700,780],[720,786],[770,790],[835,803],[920,812],[1160,822],[1320,826],[1420,832],[1568,838],[1688,841],[1868,844],[2018,846],[2048,843],[2083,833],[2128,831],[2328,832],[2618,835],[2758,837],[2858,840],[2888,844],[2968,851],[2983,856],[3048,864],[3078,865],[3088,868]];
var minute = 1048.600 / 240;
var path = 'M' + day.map(function (v, i) { return (14.8 + minute * i).toFixed(1) + ' ' + (1540 + v / 3).toFixed(1); }).join('L');
document.getElementById('dayPrice').setAttribute('d', path);
document.getElementById('dayArea').setAttribute('d', path + 'V1954H14.8Z');
document.getElementById('dayAvg').setAttribute('d', 'M' + avg.map(function (p) { return (p[0] / 2.904).toFixed(1) + ' ' + (1540 + p[1] / 3).toFixed(1); }).join('L'));

// volume per minute
var volume = 'r116 g443 r236 r195 g132 g99 g101 g118 w84 g54 g49 g104 r84 g69 r53 r56 g34 r26 r26 r41 g39 r38 g33 g43 r50 g42 g79 r80 r27 r30 g23 g21 r21 r25 g16 g10 g9 r19 r14 g12 g42 r25 g23 g29 g20 r17 g40 w29 r14 g29 g18 w20 r25 g45 r20 r21 g8 g14 g22 g33 r40 g13 g27 r14 r16 g15 g6 r20 r17 g41 g7 g10 r10 r8 r6 w20 g8 r6 g5 g7 g7 r8 g4 g10 r7 r6 r10 g9 g14 g8 g4 r3 r6 r6 g5 r3 g6 g4 r4 r11 g3 w4 r45 g9 r21 g20 g17 g15 g29 r14 g12 g10 r10 g10 r10 g9 r10 g3 g5 r5 r5 ' +
  'r8 r9 g8 r17 g24 g10 g5 r8 r5 r3 g6 r8 g3 g3 g6 w5 r4 g7 g3 r6 g3 r5 r7 r8 r10 g4 g4 r5 r8 g5 r13 r11 g7 r4 g4 r11 r58 g47 r98 g48 g57 g20 r31 g16 g12 r10 g14 g12 r9 r10 g8 g7 r4 g6 g12 r7 w4 r4 g3 g2 w3 g3 w4 g15 r4 g3 r3 g3 r2 g2 g4 g5 r2 g3 g6 r3 w4 r2 g3 g4 r3 g2 g6 g12 w14 r5 g3 w2 r2 r3 g4 g4 g5 g9 g6 g17 r8 r7 r10 r5 g7 g7 g34 g29 r19 g17 r15 g24 r14 g18 g28 g55 g17 g23 r32 r20 g36 g4 g0 w47';
var colors = { r: '#ff4533', g: '#009600', w: '#bbb' };
document.getElementById('volume').innerHTML = volume.split(' ').map(function (v, i) {
  var h = v.slice(1) / 3;
  return '<rect x="' + (14.1 + minute * i).toFixed(2) + '" y="' + (2144.600 - h).toFixed(1) + '" width="' + (i === 240 ? 3 : 4.400) + '" height="' + h.toFixed(1) + '" fill="' + colors[v[0]] + '"/>';
}).join('');
```
